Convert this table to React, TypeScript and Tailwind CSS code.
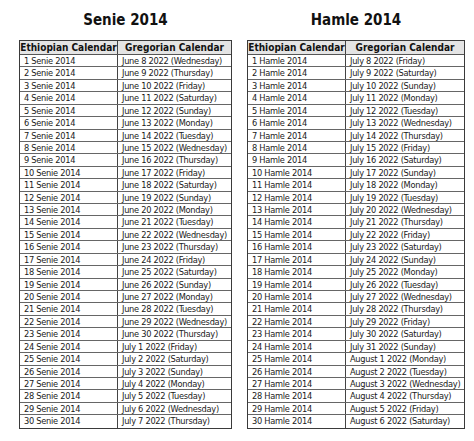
import React from "react";

const DAYS = ["Sunday", "Monday", "Tuesday", "Wednesday", "Thursday", "Friday", "Saturday"];
const MONTHS = ["January", "February", "March", "April", "May", "June", "July", "August", "September", "October", "November", "December"];

function buildRows(eth: string, start: Date) {
  const rows: [string, string][] = [];
  for (let i = 0; i < 30; i++) {
    const d = new Date(Date.UTC(start.getUTCFullYear(), start.getUTCMonth(), start.getUTCDate() + i));
    rows.push([
      `${i + 1} ${eth} 2014`,
      `${MONTHS[d.getUTCMonth()]} ${d.getUTCDate()} ${d.getUTCFullYear()} (${DAYS[d.getUTCDay()]})`,
    ]);
  }
  return rows;
}

const senie = buildRows("Senie", new Date(Date.UTC(2022, 5, 8)));
const hamle = buildRows("Hamle", new Date(Date.UTC(2022, 6, 8)));

function Table({
  title,
  rows,
  col1,
  width,
}: {
  title: string;
  rows: [string, string][];
  col1: string;
  width: string;
}) {
  return (
    <div className={`flex flex-col ${width}`}>
      <div className="h-[40px] flex items-start justify-center pt-[9px] text-[15px] font-bold leading-[22px] text-[#111]">
        {title}
      </div>
      <div className="border-[1.5px] border-[#3a3a3a] bg-white">
        <div className="flex h-[14px] bg-[#e4e4e4] border-b border-[#555] text-[10px] font-bold leading-[13px] text-[#111]">
          <div className={`${col1} shrink-0 border-r-[1.5px] border-[#444] text-center`}>Ethiopian Calendar</div>
          <div className="flex-1 text-center">Gregorian Calendar</div>
        </div>
        {rows.map(([a, b], i) => (
          <div
            key={i}
            className={`flex h-[12.43px] text-[9.2px] tracking-[-0.28px] leading-[11.4px] text-[#1a1a1a] ${i < rows.length - 1 ? "border-b border-[#666]" : ""}`}
          >
            <div className={`${col1} shrink-0 border-r-[1.5px] border-[#444] pl-[4px] whitespace-nowrap`}>{a}</div>
            <div className="flex-1 pl-[4px] whitespace-nowrap">{b}</div>
          </div>
        ))}
      </div>
    </div>
  );
}

export default function App() {
  return (
    <div className="w-[474px] h-[441px] bg-white overflow-hidden [font-family:'DejaVu_Sans_Condensed','DejaVu_Sans',sans-serif] font-stretch-condensed">
      <div className="flex pl-[19px] gap-[15px]">
        <Table title="Senie 2014" rows={senie} col1="w-[98px]" width="w-[213px]" />
        <Table title="Hamle 2014" rows={hamle} col1="w-[98px]" width="w-[218px]" />
      </div>
    </div>
  );
}
